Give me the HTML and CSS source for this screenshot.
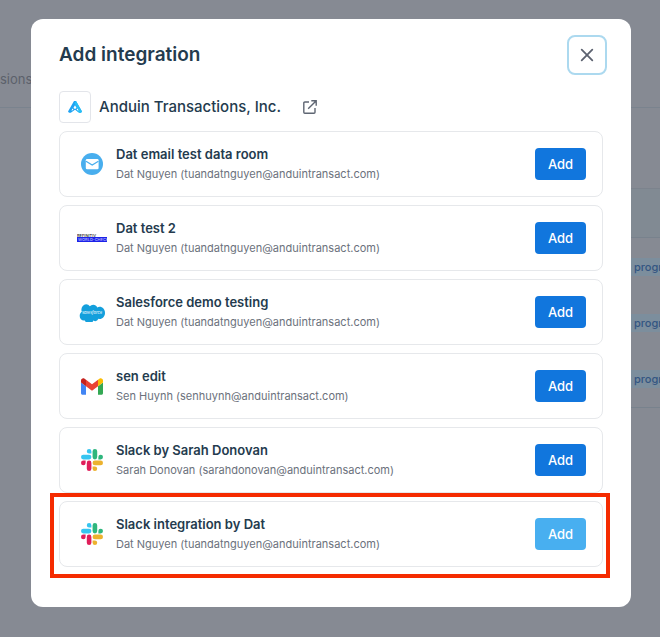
FILE: index.html
```html
<!DOCTYPE html>
<html lang="en">
<head>
<meta charset="utf-8">
<meta name="viewport" content="width=device-width, initial-scale=1">
<title>Add integration</title>
<link rel="stylesheet" href="styles.css">
</head>
<body>
<svg class="sprite" aria-hidden="true">
  <symbol id="slack" viewBox="0 0 24 24">
    <path fill="#e01e5a" d="M5.042 15.165a2.528 2.528 0 0 1-2.52 2.523A2.528 2.528 0 0 1 0 15.165a2.527 2.527 0 0 1 2.522-2.52h2.52v2.52zM6.313 15.165a2.527 2.527 0 0 1 2.521-2.52 2.527 2.527 0 0 1 2.521 2.52v6.313A2.528 2.528 0 0 1 8.834 24a2.528 2.528 0 0 1-2.521-2.522v-6.313z"/>
    <path fill="#36c5f0" d="M8.834 5.042a2.528 2.528 0 0 1-2.521-2.52A2.528 2.528 0 0 1 8.834 0a2.528 2.528 0 0 1 2.521 2.522v2.52H8.834zM8.834 6.313a2.528 2.528 0 0 1 2.521 2.521 2.528 2.528 0 0 1-2.521 2.521H2.522A2.528 2.528 0 0 1 0 8.834a2.528 2.528 0 0 1 2.522-2.521h6.312z"/>
    <path fill="#2eb67d" d="M18.956 8.834a2.528 2.528 0 0 1 2.522-2.521A2.528 2.528 0 0 1 24 8.834a2.528 2.528 0 0 1-2.522 2.521h-2.522V8.834zM17.688 8.834a2.528 2.528 0 0 1-2.523 2.521 2.527 2.527 0 0 1-2.52-2.521V2.522A2.527 2.527 0 0 1 15.165 0a2.528 2.528 0 0 1 2.523 2.522v6.312z"/>
    <path fill="#ecb22e" d="M15.165 18.956a2.528 2.528 0 0 1 2.523 2.522A2.528 2.528 0 0 1 15.165 24a2.527 2.527 0 0 1-2.52-2.522v-2.522h2.52zM15.165 17.688a2.527 2.527 0 0 1-2.52-2.523 2.526 2.526 0 0 1 2.52-2.52h6.313A2.527 2.527 0 0 1 24 15.165a2.528 2.528 0 0 1-2.522 2.523h-6.313z"/>
  </symbol>
</svg>

<div class="page">
  <div class="tabs"><span>sions</span></div>
  <div class="toolbar"></div>
  <div class="list-head"></div>
  <div class="list">
    <div class="list-row"><span class="tag">progress</span></div>
    <div class="list-row"><span class="tag">progress</span></div>
    <div class="list-row"><span class="tag">progress</span></div>
  </div>
</div>

<div class="overlay">
  <section class="modal" role="dialog" aria-labelledby="dialog-title">
    <header class="modal-header">
      <h1 id="dialog-title">Add integration</h1>
      <button class="close" type="button" aria-label="Close">
        <svg width="14" height="14" viewBox="0 0 14 14"><path d="M1.700 1.700l10.600 10.600M12.300 1.700L1.700 12.300" fill="none" stroke="#5c6270" stroke-width="1.800" stroke-linecap="round"/></svg>
      </button>
    </header>

    <div class="org">
      <span class="org-logo">
        <svg width="14" height="12" viewBox="0 0 14 12"><path fill="#1fa3f3" d="M6 0h2l6 10.400-1 1.400h-1.800L7 8.800l-4.200 3H1L0 10.400z"/><path fill="#27c0f5" d="M8 0l6 10.400-1 1.400h-1.800L9.300 10.400 10 8.500 6.500 2z"/><path fill="#fff" d="M7 4.200l1.600 2.700L7 8 5.400 6.900zM4.200 7.500l1.300 1-1.900 1.400zM9.800 7.500l-1.300 1 1.900 1.400z"/></svg>
      </span>
      <h2>Anduin Transactions, Inc.</h2>
      <a class="org-link" href="#" aria-label="Open organization">
        <svg width="14" height="14" viewBox="0 0 14 14"><path d="M6 2H1.800Q.8 2 .8 3v9.200q0 1 1 1H11q1 0 1-1V8M8.300.8h4.900v4.900M13 1L5.200 8.800" fill="none" stroke="#5f6673" stroke-width="1.400"/></svg>
      </a>
    </div>

    <ul class="cards">
      <li class="card">
        <span class="icon">
          <svg width="22" height="22" viewBox="0 0 22 22"><circle cx="11" cy="11" r="11" fill="#48aeee"/><rect x="4.800" y="6" width="12.800" height="10.200" rx="1.300" fill="#fff"/><path d="M5 8.300l6.200 3.800 6.200-3.800" fill="none" stroke="#48aeee" stroke-width="1.200"/></svg>
        </span>
        <div class="info"><h3>Dat email test data room</h3><p>Dat Nguyen (tuandatnguyen@anduintransact.com)</p></div>
        <button class="add" type="button">Add</button>
      </li>
      <li class="card">
        <span class="icon">
          <svg width="30" height="10" viewBox="0 0 30 10"><text class="mark-top" x="0" y="4">REFINITIV</text><rect y="4" width="30" height="5" fill="#1c22e8"/><text class="mark-bottom" x="1" y="8">WORLD-CHECK</text></svg>
        </span>
        <div class="info"><h3>Dat test 2</h3><p>Dat Nguyen (tuandatnguyen@anduintransact.com)</p></div>
        <button class="add" type="button">Add</button>
      </li>
      <li class="card">
        <span class="icon">
          <svg width="26" height="19" viewBox="0 0 26 19"><path fill="#139fdc" d="M10.800 2.100A4.700 4.700 0 0 1 14.200.7c1.800 0 3.300 1 4.100 2.400a5.400 5.400 0 0 1 2.300-.5c3 0 5.400 2.500 5.400 5.500s-2.400 5.500-5.400 5.500l-1.100-.1a4 4 0 0 1-5.200 1.600 4.500 4.500 0 0 1-8.400-.2l-1 .1A4.200 4.200 0 0 1 .7 10.800c0-1.600.9-3 2.100-3.700a4.900 4.900 0 0 1-.4-2A4.700 4.700 0 0 1 7.100.3c1.500 0 2.900.7 3.700 1.800z" transform="translate(0 1) scale(1 1.100)"/><text class="cloud-text" x="13" y="11" text-anchor="middle">salesforce</text></svg>
        </span>
        <div class="info"><h3>Salesforce demo testing</h3><p>Dat Nguyen (tuandatnguyen@anduintransact.com)</p></div>
        <button class="add" type="button">Add</button>
      </li>
      <li class="card">
        <span class="icon">
          <svg width="22" height="17" viewBox="52 42 88 66"><path fill="#4285f4" d="M58 108h14V74L52 59v43c0 3.320 2.690 6 6 6"/><path fill="#34a853" d="M120 108h14c3.320 0 6-2.690 6-6V59l-20 15"/><path fill="#fbbc04" d="M120 48v26l20-15v-8c0-7.420-8.470-11.650-14.400-7.200"/><path fill="#ea4335" d="M72 74V48l24 18 24-18v26L96 92"/><path fill="#c5221f" d="M52 51v8l20 15V48l-5.600-4.200c-5.940-4.450-14.400-.22-14.400 7.200"/></svg>
        </span>
        <div class="info"><h3>sen edit</h3><p>Sen Huynh (senhuynh@anduintransact.com)</p></div>
        <button class="add" type="button">Add</button>
      </li>
      <li class="card">
        <span class="icon"><svg width="22" height="22"><use href="#slack"/></svg></span>
        <div class="info"><h3>Slack by Sarah Donovan</h3><p>Sarah Donovan (sarahdonovan@anduintransact.com)</p></div>
        <button class="add" type="button">Add</button>
      </li>
      <li class="card highlighted">
        <span class="icon"><svg width="22" height="22"><use href="#slack"/></svg></span>
        <div class="info"><h3>Slack integration by Dat</h3><p>Dat Nguyen (tuandatnguyen@anduintransact.com)</p></div>
        <button class="add pending" type="button">Add</button>
      </li>
    </ul>
  </section>
</div>
</body>
</html>
```
FILE: styles.css
```css
* { box-sizing: border-box; }

body {
  margin: 0;
  min-height: 100vh;
  overflow: hidden;
  background: #868a93;
  color: #243b4e;
  font-family: Inter, "Liberation Sans", sans-serif;
}

h1, h2, h3, p, ul { margin: 0; padding: 0; }
button { font-family: inherit; cursor: pointer; }
svg { display: block; }
.sprite { position: absolute; width: 0; height: 0; }

/* Page behind the dialog */
.tabs {
  display: flex;
  align-items: flex-end;
  height: 108px;
  padding-bottom: 20px;
  border-bottom: 1px solid #7a838e;
  font-size: 13px;
  line-height: 16px;
  color: #5c616b;
}
.toolbar { height: 80px; }
.list-head,
.list { margin-left: 60px; }
.list-head {
  height: 50px;
  background: #818a93;
  border-top: 1px solid #7c838d;
  border-bottom: 1px solid #78828d;
}
.list {
  padding-top: 1px;
  border-bottom: 1px solid #78828d;
}
.list-row {
  display: flex;
  align-items: center;
  justify-content: flex-end;
  height: 56px;
}
.tag {
  width: 30px;
  padding-left: 4px;
  background: #7c8e9d;
  color: #335582;
  font-size: 11px;
  font-weight: 500;
  line-height: 18px;
}

/* Dialog */
.overlay {
  position: fixed;
  inset: 0;
  display: flex;
  justify-content: center;
  align-items: flex-start;
  padding: 19px 29px 30px 31px;
}
.modal {
  flex: 1;
  max-width: 600px;
  padding: 16px 28px 40px;
  border-radius: 12px;
  background: #fff;
}
.modal-header {
  display: flex;
  align-items: center;
  justify-content: space-between;
  margin-right: -4px;
}
h1 { font-size: 19px; line-height: 28px; font-weight: 600; }
.close {
  display: grid;
  place-items: center;
  width: 40px;
  height: 40px;
  padding: 0;
  border: 2px solid #acd9ef;
  border-radius: 8px;
  background: #fff;
}

.org {
  display: flex;
  align-items: center;
  gap: 8px;
  margin: 16px 0 8px;
}
.org-logo {
  display: grid;
  place-items: center;
  width: 32px;
  height: 32px;
  border: 1px solid #e3e5ea;
  border-radius: 4px;
}
h2 { font-size: 15px; line-height: 24px; font-weight: 500; }
.org-link { margin-left: 14px; }

.cards {
  display: flex;
  flex-direction: column;
  gap: 8px;
  list-style: none;
}
.card {
  position: relative;
  display: flex;
  align-items: center;
  gap: 8px;
  padding: 12px 16px;
  border: 1px solid #e6e8eb;
  border-radius: 8px;
}
.icon {
  display: grid;
  place-items: center;
  width: 32px;
  height: 32px;
}
.info { flex: 1; }
h3 { font-size: 13px; line-height: 20px; font-weight: 600; }
.info p { font-size: 11px; line-height: 20px; color: #6b717c; }
.add {
  width: 51px;
  height: 32px;
  padding: 0;
  border: 0;
  border-radius: 4px;
  background: #1176dd;
  color: #fff;
  font-size: 13px;
  font-weight: 500;
}
.add.pending { background: #48aff0; }

.highlighted::after {
  content: "";
  position: absolute;
  inset: -9px -8px -12px -10px;
  border: 4px solid #f52b00;
  pointer-events: none;
}

/* Lettering inside the logos */
.mark-top { font-size: 4px; font-weight: 500; fill: #222; }
.mark-bottom { font-size: 4px; font-weight: 500; fill: #b9bcff; }
.cloud-text { font-size: 4px; font-style: italic; font-weight: 500; fill: #e3f5fd; }
```
